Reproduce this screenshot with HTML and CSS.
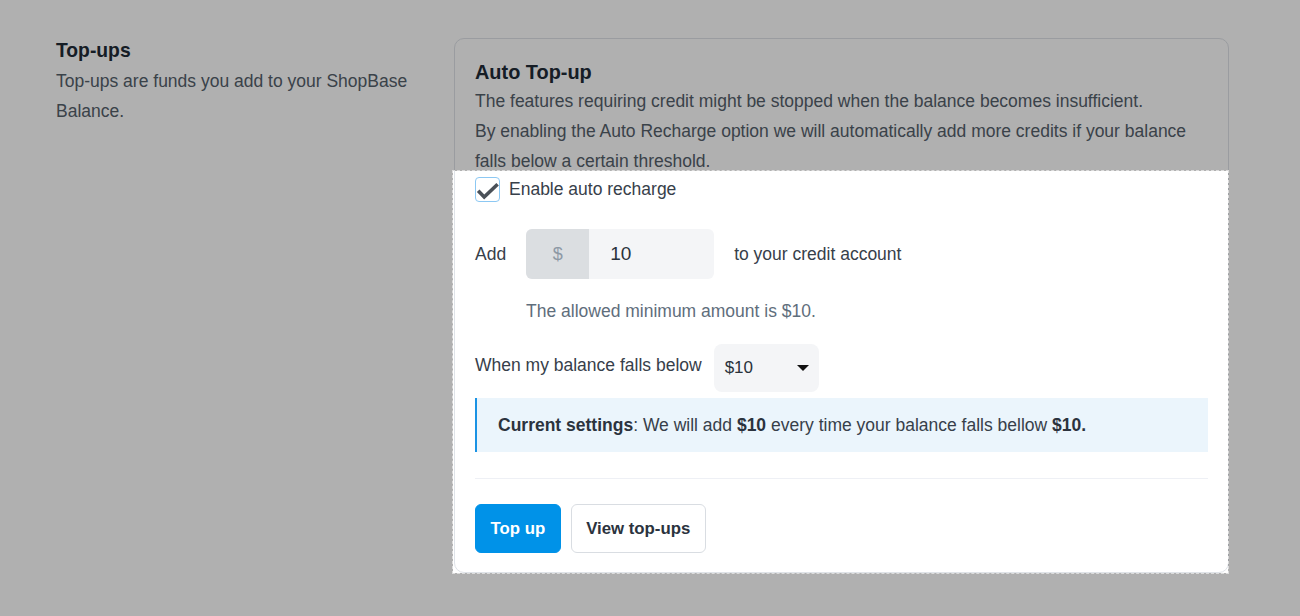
FILE: index.html
```html
<!DOCTYPE html>
<html lang="en">
<head>
<meta charset="utf-8">
<title>Top-ups</title>
<link rel="stylesheet" href="styles.css">
</head>
<body>
<div class="page">
  <div class="layout">
    <div class="aside">
      <h2 class="aside-title">Top-ups</h2>
      <p class="aside-desc">Top-ups are funds you add to your ShopBase Balance.</p>
    </div>
    <section class="card">
      <h3 class="card-title">Auto Top-up</h3>
      <p class="card-desc">The features requiring credit might be stopped when the balance becomes insufficient.<br>By enabling the Auto Recharge option we will automatically add more credits if your balance falls below a certain threshold.</p>
      <div class="spot">
        <label class="check-row">
          <span class="checkbox">
            <svg width="23" height="23" viewBox="0 0 23 23" aria-hidden="true"><path d="M2.2 12.8 L8.2 19 L21.6 6.2" fill="none" stroke="#4a5058" stroke-width="3.6" stroke-linejoin="miter"/></svg>
          </span>
          <span class="check-label">Enable auto recharge</span>
        </label>
        <div class="add-row">
          <span class="row-label">Add</span>
          <div class="input-group">
            <span class="prefix">$</span>
            <span class="input-value">10</span>
          </div>
          <span class="row-label">to your credit account</span>
        </div>
        <p class="help">The allowed minimum amount is $10.</p>
        <div class="balance-row">
          <span class="balance-label">When my balance falls below</span>
          <div class="select"><span class="select-value">$10</span><span class="caret"></span></div>
        </div>
        <div class="notice"><b>Current settings</b>: We will add <b>$10</b> every time your balance falls bellow <b>$10.</b></div>
        <hr class="divider">
        <div class="actions">
          <button class="btn btn-primary" type="button">Top up</button>
          <button class="btn btn-default" type="button">View top-ups</button>
        </div>
      </div>
    </section>
  </div>
</div>
</body>
</html>
```
FILE: styles.css
```css
* { box-sizing: border-box; }

html, body {
  margin: 0;
  background: #ffffff;
  font-family: "Liberation Sans", Arial, sans-serif;
  color: #37404a;
}

.page {
  min-height: 100vh;
  padding: 36px 71px 0 56px;
}

.layout {
  display: grid;
  grid-template-columns: 380px 1fr;
  column-gap: 18px;
  align-items: start;
}

.aside-title {
  margin: 0;
  font-size: 19.3px;
  line-height: 30px;
  font-weight: 700;
  color: #212b36;
}

.aside-desc {
  margin: 0;
  font-size: 17.5px;
  line-height: 30px;
  color: #55606b;
}

.card {
  margin-top: 2px;
  background: #ffffff;
  border: 1px solid #dfe3e8;
  border-radius: 10px;
  padding: 20px 20px 0;
}

.card-title {
  margin: 0;
  font-size: 19.9px;
  line-height: 27px;
  font-weight: 700;
  color: #212b36;
}

.card-desc {
  margin: 0;
  font-size: 17.5px;
  line-height: 30px;
  color: #55606b;
}

.spot {
  position: relative;
  padding: 1px 0 19px;
  font-size: 17.5px;
}

.spot::after {
  content: "";
  position: absolute;
  top: -5px;
  left: -22px;
  right: -20px;
  bottom: -1px;
  outline: 1px dashed #dcdcdc;
  box-shadow: 0 0 0 3000px rgba(0, 0, 0, 0.31);
  pointer-events: none;
  z-index: 10;
}

.check-row {
  display: flex;
  align-items: center;
  gap: 9px;
  height: 25px;
}

.checkbox {
  width: 25px;
  height: 25px;
  border: 1px solid #8cc8f3;
  border-radius: 4px;
  background: #ffffff;
  display: flex;
}

.check-label {
  line-height: 25px;
  color: #37404a;
}

.add-row {
  margin-top: 27px;
  display: flex;
  align-items: center;
  gap: 20px;
}

.row-label {
  color: #37404a;
}

.input-group {
  display: flex;
  width: 188px;
  height: 50px;
  border-radius: 6px;
  overflow: hidden;
  background: #f4f5f7;
}

.prefix {
  width: 63px;
  display: flex;
  align-items: center;
  justify-content: center;
  background: #dbdee1;
  color: #8d99a5;
  font-size: 18px;
}

.input-value {
  display: flex;
  align-items: center;
  padding-left: 21px;
  font-size: 19px;
  color: #2a323b;
}

.help {
  margin: 17px 0 0 51px;
  line-height: 30px;
  color: #5f6e7c;
}

.balance-row {
  margin-top: 18px;
  display: flex;
  align-items: flex-start;
  gap: 12px;
}

.balance-label {
  line-height: 42px;
  color: #37404a;
}

.select {
  width: 105px;
  height: 48px;
  border-radius: 8px;
  background: #f4f5f7;
  display: flex;
  align-items: center;
  justify-content: space-between;
  padding: 0 10px 0 11px;
}

.select-value {
  font-size: 17px;
  color: #2a323b;
}

.caret {
  width: 0;
  height: 0;
  border-left: 6px solid transparent;
  border-right: 6px solid transparent;
  border-top: 6px solid #111111;
}

.notice {
  margin-top: 6px;
  background: #ebf5fc;
  border-left: 2px solid #1b93e4;
  padding: 15px 21px;
  line-height: 24px;
  color: #37404a;
}

.notice b {
  color: #2b333e;
}

.divider {
  margin: 26px 0 0;
  border: 0;
  height: 1px;
  background: #eef0f5;
}

.actions {
  margin-top: 25px;
  display: flex;
  gap: 10px;
}

.btn {
  height: 49px;
  padding: 0 14.5px;
  border-radius: 6px;
  font-family: "Liberation Sans", Arial, sans-serif;
  font-size: 16.8px;
  font-weight: 700;
  cursor: pointer;
}

.btn-primary {
  background: #0092e8;
  border: 1px solid #0092e8;
  color: #ffffff;
}

.btn-default {
  background: #ffffff;
  border: 1px solid #d9dde2;
  color: #2b333e;
}
```
